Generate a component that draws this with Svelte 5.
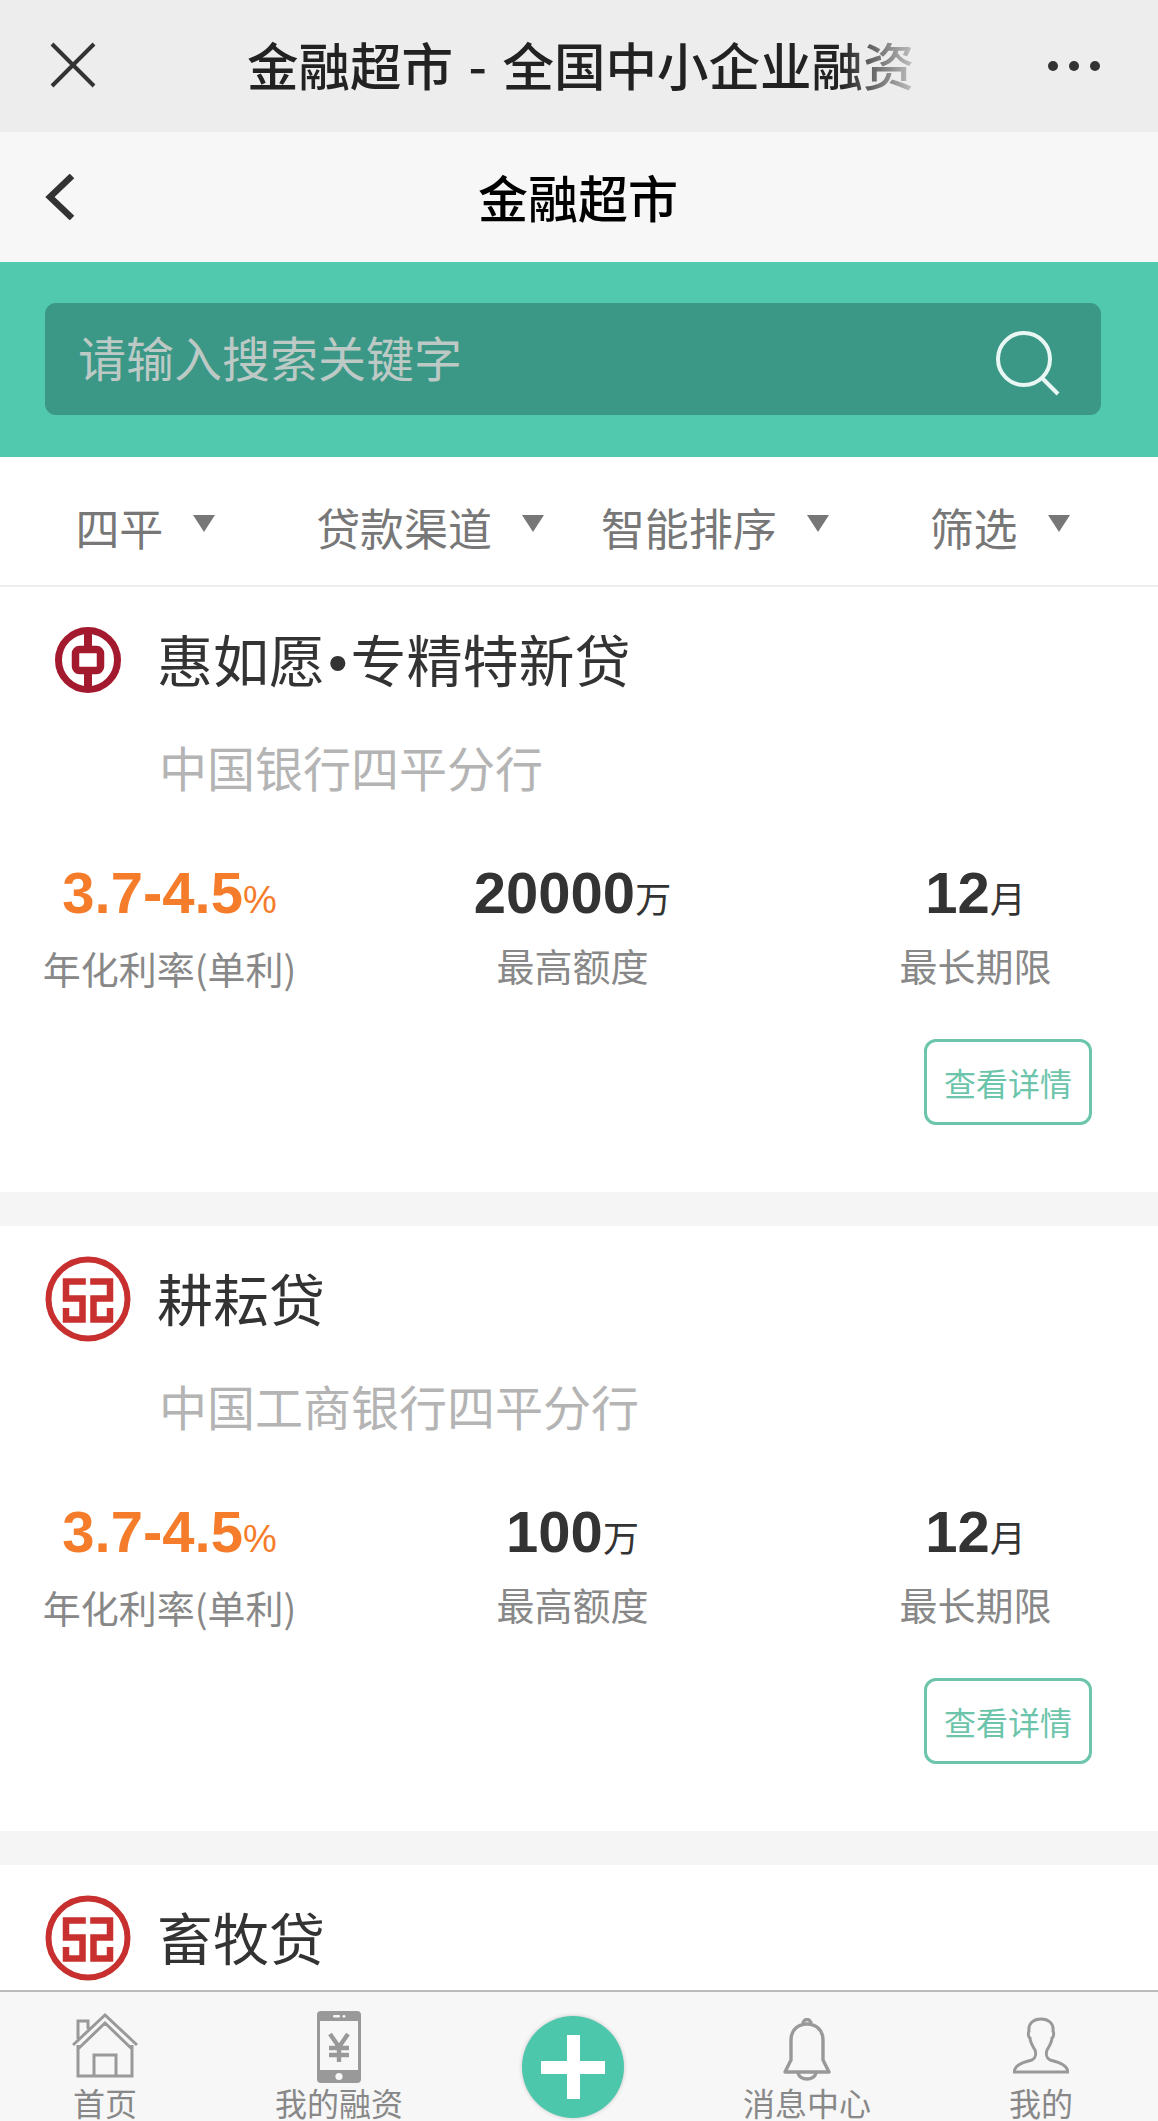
<script>
    const filters = ["四平", "贷款渠道", "智能排序", "筛选"];
    const products = [
        {title: "惠如愿", rest: "专精特新贷", bank: "boc", branch: "中国银行四平分行", amount: "20000"},
        {title: "耕耘贷", bank: "icbc", branch: "中国工商银行四平分行", amount: "100"},
        {title: "畜牧贷", bank: "icbc", branch: "中国工商银行四平分行", amount: "100"}
    ];
</script>

<div class="page">
    <header class="wechat-bar">
        <svg class="close" width="46" height="46" viewBox="0 0 46 46">
            <path d="M2 2 L44 44 M44 2 L2 44" stroke="#333" stroke-width="4" fill="none"/>
        </svg>
        <div class="wechat-title">金融超市 - 全国中小企业融资</div>
        <div class="dots"><i></i><i></i><i></i></div>
    </header>

    <nav class="title-bar">
        <svg class="back" width="30" height="46" viewBox="0 0 30 46">
            <path d="M27 2 L5 23 L27 44" stroke="#333" stroke-width="6.5" fill="none"/>
        </svg>
        <h1>金融超市</h1>
    </nav>

    <div class="search-wrap">
        <div class="search">
            <span class="placeholder">请输入搜索关键字</span>
            <svg width="66" height="66" viewBox="0 0 66 66">
                <circle cx="29" cy="29" r="26" stroke="#e8f7f3" stroke-width="4" fill="none"/>
                <path d="M47 48 L63 64" stroke="#e8f7f3" stroke-width="4" fill="none"/>
            </svg>
        </div>
    </div>

    <div class="filters">
        {#each filters as f}
            <div class="filter"><span>{f}</span><i class="arrow"></i></div>
        {/each}
    </div>

    <main class="list">
        {#each products as p}
            <section class="card">
                <div class="head">
                    <div class="logo">
                        {#if p.bank === "boc"}
                            <svg width="66" height="66" viewBox="0 0 66 66">
                                <circle cx="33" cy="33" r="29.5" stroke="#a3192e" stroke-width="7" fill="none"/>
                                <rect x="29" y="2" width="8" height="62" fill="#a3192e"/>
                                <rect x="20.5" y="22.5" width="25" height="21" rx="4" stroke="#a3192e" stroke-width="7.5" fill="#fff"/>
                            </svg>
                        {:else}
                            <svg width="86" height="86" viewBox="0 0 86 86">
                                <circle cx="43" cy="43" r="39.5" stroke="#c8302f" stroke-width="6" fill="none"/>
                                <path d="M40.8 25.5 H21 V42.5 H37.5 V63.5 H21 V52 M45.2 25.5 H65 V42.5 H48.5 V63.5 H65 V52" stroke="#c8302f" stroke-width="6.5" fill="none"/>
                            </svg>
                        {/if}
                    </div>
                    <h2>{p.title}{#if p.rest}<span class="bullet">•</span>{p.rest}{/if}</h2>
                </div>
                <div class="branch">{p.branch}</div>
                <div class="stats">
                    <div class="stat">
                        <div class="value rate">3.7-4.5<small class="pct">%</small></div>
                        <div class="label">年化利率(单利)</div>
                    </div>
                    <div class="stat">
                        <div class="value">{p.amount}<small>万</small></div>
                        <div class="label">最高额度</div>
                    </div>
                    <div class="stat">
                        <div class="value">12<small>月</small></div>
                        <div class="label">最长期限</div>
                    </div>
                </div>
                <div class="actions"><button>查看详情</button></div>
            </section>
        {/each}
    </main>

    <footer class="tabs">
        <div class="tab">
            <svg width="66" height="66" viewBox="0 0 66 66">
                <path d="M1 33 L33 3 L65 33 M6 27 V9 H16 V17 M6 33 V64 H60 V33 M6 37 L33 11 L60 37 M22 64 V43 H44 V64" stroke="#999" stroke-width="3" fill="none"/>
            </svg>
            <span>首页</span>
        </div>
        <div class="tab">
            <svg class="phone" width="44" height="72" viewBox="0 0 44 72">
                <rect width="44" height="72" rx="4" fill="#999"/>
                <rect x="3" y="10" width="38" height="49" fill="#f7f7f7"/>
                <rect x="16" y="4" width="7" height="2.6" rx="1.3" fill="#f7f7f7"/>
                <circle cx="27" cy="5.3" r="1.4" fill="#f7f7f7"/>
                <circle cx="22" cy="65.5" r="3.6" fill="#f7f7f7"/>
                <path d="M13 23 L22 36 L31 23 M22 36 V51 M12 37 H32 M12 44 H32" stroke="#999" stroke-width="4.4" fill="none"/>
            </svg>
            <span>我的融资</span>
        </div>
        <div class="tab">
            <div class="plus"></div>
        </div>
        <div class="tab">
            <svg class="bell" width="50" height="64" viewBox="0 0 50 64">
                <path d="M3 54 L9 42 V22 C9 12 16 6 25 6 C34 6 41 12 41 22 V42 L47 54 Z M21 6 C21 0 29 0 29 6 M16 55 C18 63 32 63 34 55" stroke="#999" stroke-width="3.4" stroke-linejoin="round" fill="none"/>
            </svg>
            <span>消息中心</span>
        </div>
        <div class="tab">
            <svg class="person" width="56" height="58" viewBox="0 0 56 58">
                <path d="M1 55 H55 C54 47 44 45 37 43 C33 41 33 36 34 33 C37 28 39 25 39 21 C41 20 41 16 40 14 C41 6 35 2 28 2 C21 2 15 6 16 14 C15 16 15 20 17 21 C17 25 19 28 22 33 C23 36 23 41 19 43 C12 45 2 47 1 55 Z" stroke="#999" stroke-width="3" fill="none"/>
            </svg>
            <span>我的</span>
        </div>
    </footer>
</div>

<style>
    :global(body) {
        margin: 0;
        background: #fff;
    }

    .page {
        width: 1158px;
        height: 2121px;
        display: flex;
        flex-direction: column;
        overflow: hidden;
        font-family: "Noto Sans CJK SC", "Liberation Sans", sans-serif;
    }

    .wechat-bar {
        height: 132px;
        flex: none;
        background: #ededed;
        display: flex;
        align-items: center;
        padding: 0 58px 0 50px;
        box-sizing: border-box;
    }

    .wechat-bar .close {
        flex: none;
        margin-bottom: 2px;
    }

    .wechat-title {
        width: 668px;
        margin-left: 151px;
        margin-bottom: 6px;
        flex: none;
        white-space: nowrap;
        overflow: hidden;
        font-size: 51.5px;
        font-weight: 500;
        word-spacing: 4px;
        color: #222;
        -webkit-mask-image: linear-gradient(to right, #000 89%, rgba(0, 0, 0, 0.2) 100%);
        mask-image: linear-gradient(to right, #000 89%, rgba(0, 0, 0, 0.2) 100%);
    }

    .dots {
        margin-left: auto;
        display: flex;
        gap: 11px;
    }

    .dots i {
        width: 10px;
        height: 10px;
        border-radius: 50%;
        background: #333;
    }

    .title-bar {
        height: 130px;
        flex: none;
        background: #f7f7f7;
        display: flex;
        align-items: center;
        justify-content: center;
        position: relative;
    }

    .back {
        position: absolute;
        left: 45px;
        top: 42px;
    }

    h1 {
        margin: 0 0 3px -2px;
        font-size: 50px;
        font-weight: 500;
        color: #000;
    }

    .search-wrap {
        height: 195px;
        flex: none;
        background: #50c9ae;
        padding: 41px 57px 0 45px;
        box-sizing: border-box;
    }

    .search {
        height: 112px;
        background: #3b9786;
        border-radius: 11px;
        display: flex;
        align-items: center;
        justify-content: space-between;
        padding: 0 40px 0 33px;
    }

    .search svg {
        margin-top: 8px;
    }

    .placeholder {
        font-size: 48px;
        color: #bcc9c5;
        margin-bottom: 6px;
    }

    .filters {
        height: 130px;
        flex: none;
        box-sizing: border-box;
        border-bottom: 2px solid #eee;
        display: grid;
        grid-template-columns: repeat(4, 1fr);
        padding: 12px 16px 0 3px;
    }

    .filter {
        display: flex;
        align-items: center;
        justify-content: center;
        gap: 30px;
        font-size: 44px;
        color: #777;
    }

    .arrow {
        width: 0;
        height: 0;
        border-left: 11px solid transparent;
        border-right: 11px solid transparent;
        border-top: 17px solid #777;
        margin-bottom: 8px;
    }

    .list {
        flex: 1;
        min-height: 0;
        overflow: hidden;
        display: flex;
        flex-direction: column;
        gap: 34px;
        background: #f5f5f5;
    }

    .card {
        flex: none;
        height: 605px;
        box-sizing: border-box;
        background: #fff;
        padding-top: 30px;
    }

    .head {
        height: 86px;
        display: flex;
        align-items: center;
        padding-left: 45px;
    }

    .logo {
        width: 86px;
        display: flex;
        justify-content: center;
    }

    .logo svg {
        display: block;
    }

    h2 {
        margin: 0 0 5px 26px;
        font-size: 56px;
        font-weight: 400;
        color: #333;
    }

    .bullet {
        font-family: "Liberation Sans", sans-serif;
        margin: 0 3px;
    }

    .branch {
        margin: 33px 0 0 159px;
        font-size: 48px;
        line-height: 60px;
        color: #b4b4b4;
    }

    .stats {
        margin: 62px 0 0 -32px;
        display: grid;
        grid-template-columns: repeat(3, 403px);
    }

    .stat {
        text-align: center;
    }

    .value {
        font-family: "Liberation Sans", "Noto Sans CJK SC", sans-serif;
        font-size: 58px;
        font-weight: 700;
        line-height: 70px;
        color: #333;
    }

    .value small {
        font-family: "Noto Sans CJK SC", "Liberation Sans", sans-serif;
        font-size: 36px;
        font-weight: 400;
    }

    .value .pct {
        font-family: "Liberation Sans", sans-serif;
        font-size: 38px;
    }

    .rate {
        color: #f47c2a;
    }

    .label {
        margin-top: 8px;
        font-size: 38px;
        line-height: 50px;
        color: #888;
    }

    .actions {
        display: flex;
        justify-content: flex-end;
        padding-right: 66px;
        margin-top: 46px;
    }

    button {
        width: 168px;
        height: 86px;
        box-sizing: border-box;
        border: 3px solid #6cc5aa;
        border-radius: 12px;
        background: #fff;
        font-family: inherit;
        font-size: 32px;
        color: #6cc5aa;
        padding: 0;
    }

    .tabs {
        height: 131px;
        flex: none;
        box-sizing: border-box;
        border-top: 2px solid #bbb;
        background: #f7f7f7;
        display: grid;
        grid-template-columns: repeat(5, 234px);
        margin-left: -12px;
        width: 1170px;
        overflow: hidden;
    }

    .tab {
        height: 129px;
        box-sizing: border-box;
        padding-bottom: 2px;
        position: relative;
        display: flex;
        flex-direction: column;
        align-items: center;
        justify-content: flex-end;
        font-size: 32px;
        color: #888;
    }

    .tab span {
        line-height: 34px;
        white-space: nowrap;
    }

    .tab svg {
        display: block;
        margin-bottom: 7px;
    }

    .tab .phone {
        margin-bottom: 2px;
    }

    .tab .bell {
        margin-bottom: 3px;
    }

    .tab .person {
        margin-bottom: 10px;
    }

    .plus {
        position: absolute;
        left: 66px;
        top: 24px;
        width: 102px;
        height: 102px;
        border-radius: 50%;
        box-shadow: 0 0 4px rgba(0, 0, 0, 0.2);
        background:
            linear-gradient(#fff, #fff) center / 64px 13px no-repeat,
            linear-gradient(#fff, #fff) center / 13px 64px no-repeat,
            #4cc7ab;
    }
</style>
